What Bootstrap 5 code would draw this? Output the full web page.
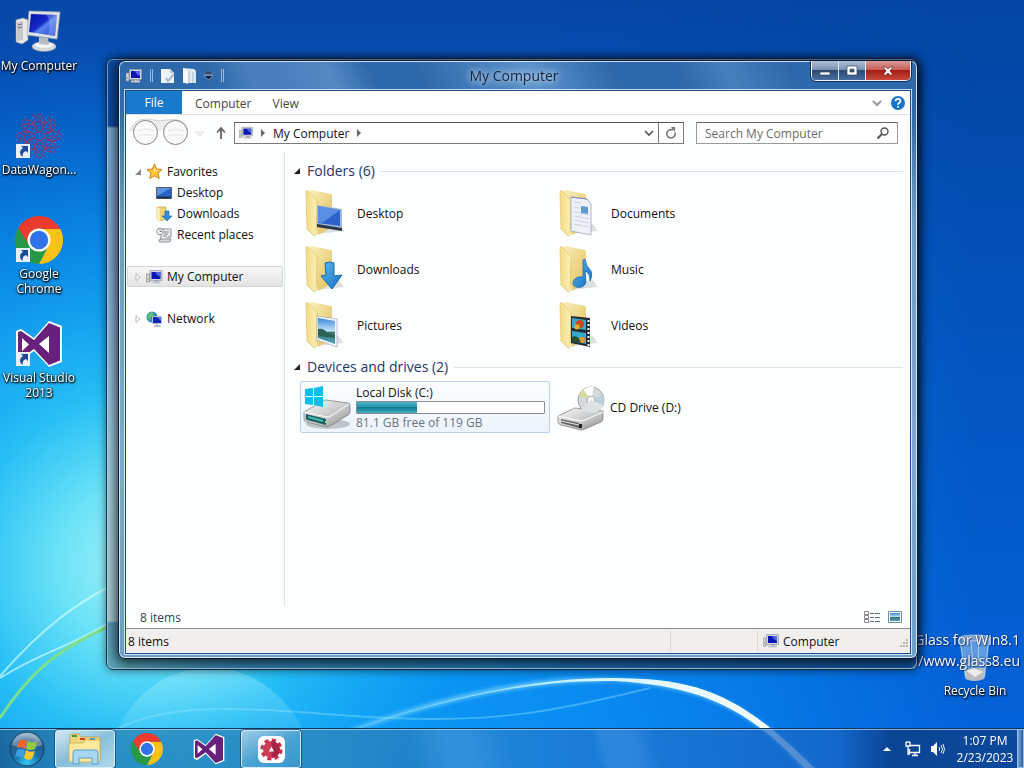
<!DOCTYPE html>
<html lang="en">
<head>
<meta charset="utf-8">
<meta name="viewport" content="width=device-width, initial-scale=1">
<title>My Computer</title>
<link href="https://cdn.jsdelivr.net/npm/bootstrap@5.3.0/dist/css/bootstrap.min.css" rel="stylesheet">
<style>
  body { font-family: "Open Sans", "Noto Sans", sans-serif; font-size: 12px; line-height: 15px; color: #111; background: #0868d0; }
  svg { display: block; flex: none; }
  button { font: inherit; color: inherit; }
  a { color: inherit; text-decoration: none; }
  .plain-btn { border: 0; background: none; padding: 0; display: flex; align-items: center; justify-content: center; }
  .wallpaper { width: 100%; height: 100%; }

  /* desktop shortcuts */
  .shortcut-cell { width: 78px; height: 104px; padding-top: 8px; gap: 2px; color: #fff; text-align: center; text-shadow: 0 1px 2px #000, 1px 1px 2px #000, 0 0 3px rgba(0,0,0,.7); }
  .bin-cell { right: 10px; bottom: 30px; width: 78px; gap: 0; color: #fff; text-shadow: 0 1px 2px #000, 1px 1px 2px #000; }
  .watermark { right: 4px; bottom: 57px; font-size: 14px; line-height: 21px; color: #fff; text-shadow: 0 0 2px rgba(0,20,80,.8), 1px 1px 1px rgba(0,20,80,.6); }

  /* windows */
  .glass-back { inset: 58px 106px 58px 106px; border-radius: 7px; border: 1px solid #16304f; box-shadow: inset 0 0 0 1px rgba(200,225,250,.55), 0 0 10px rgba(0,0,0,.5);
    background: linear-gradient(180deg, #0c4ba3 0, #0c4ba3 67px, #7ba7d4 69px, #83add6 200px, #a0cce0 400px, #a8ccd2 562px, #5a98b4 564px, #5eaac2 100%); }
  .glass-back::after { content: ""; position: absolute; left: 1px; right: 1px; bottom: 1px; height: 20px; border-radius: 0 0 6px 6px; background: linear-gradient(90deg, #5aa6b6 0, #3585b0 15%, #2377b2 45%, #1d68b0 60%, #12539c 100%); }
  .glass-front { inset: 60px 106px 69px 118px; border-radius: 7px; border: 1px solid #0d1a2f; padding: 0 6px 4px; box-shadow: inset 0 0 0 1px rgba(235,245,255,.85), 0 2px 12px 2px rgba(0,0,0,.75);
    background: linear-gradient(65deg, transparent 0 12%, rgba(130,175,225,.3) 17% 20%, rgba(130,175,225,.45) 27%, transparent 32% 38%, rgba(140,190,235,.5) 52%, rgba(120,170,225,.3) 57%, transparent 62% 70%, rgba(120,170,225,.35) 76%, transparent 84%) top/100% 30px no-repeat, linear-gradient(180deg, #2d68ab 0, #2f6aac 50px, #6f9cc6 160px, #7da9cd 400px, #6b9fc5 100%); }
  .title-strip { height: 29px; }
  .title-text { font-size: 14px; color: #16263e; text-shadow: 0 0 6px rgba(255,255,255,.75), 0 0 10px rgba(255,255,255,.6); }
  .quick-bar { gap: 8px; padding-left: 1px; }
  .quick-sep { width: 3px; height: 13px; border: solid rgba(190,215,245,.7); border-width: 0 1px; }
  .caption-set { border: 1px solid #f0f6ff; border-top: 0; border-radius: 0 0 5px 5px; outline: 1px solid rgba(10,25,55,.7); height: 20px; overflow: hidden; }
  .caption-set button { width: 27px; background: linear-gradient(#aebfd4 0, #7c94b4 45%, #2a4973 50%, #466e9f 100%); border-right: 1px solid #dbe8f7; }
  .caption-set .close-btn { width: 44px; border-right: 0; background: linear-gradient(#d99a94 0, #c46059 45%, #a51d15 50%, #c9483a 100%); }
  .client { border: 1px solid #1d4a8c; outline: 1px solid rgba(235,245,255,.8); background: #fdfefe; }
  .tab-row { height: 24px; border-bottom: 1px solid #dcdfe2; background: #fff; color: #444; }
  .tab-row a { padding: 0 13px; height: 23px; line-height: 26px; }
  .tab-row .file-tab { background: #1979ca; color: #fff; padding: 0; width: 56px; text-align: center; line-height: 24px; }
  .address-row { height: 36px; padding: 0 12px 0 4px; }
  .address-box { height: 22px; border: 1px solid #7b7b7b; border-top-color: #555; background: #fff; }
  .refresh-btn { width: 25px; height: 20px; border-left: 1px solid #777 !important; }
  .search-box { width: 202px; height: 22px; border: 1px solid #9a9a9a; border-top-color: #666; margin-left: 12px; background: #fff; }
  .search-box input { border: 0; outline: 0; background: transparent; padding: 0 0 0 8px; min-width: 0; color: #555; }
  .search-box input::placeholder { color: #6b6b6b; opacity: 1; }

  .side-nav { width: 159px; border-right: 1px solid #dde6f0; padding: 10px 1px 0 1px; }
  .side-nav a { display: flex; align-items: center; height: 21px; border: 1px solid transparent; padding-left: 6px; gap: 4px; }
  .side-nav .sub-item { padding-left: 28px; gap: 5px; }
  .side-nav .picked { border-color: #d6d6d6; border-radius: 2px; background: linear-gradient(#f7f7f7, #e4e4e4); margin: 21px 0; }
  .group-head { font-size: 14px; line-height: 20px; color: #24346b; font-weight: 400; margin: 0; gap: 6px; }
  .group-head::after { content: ""; flex: 1; height: 1px; background: #dfe2e4; }
  .listing { padding: 10px 7px 0 8px; }
  .tile-grid { display: grid; grid-template-columns: repeat(auto-fill, 250px); column-gap: 4px; padding-left: 7px; }
  .tile { display: flex; align-items: center; height: 56px; padding-left: 4px; gap: 5px; }
  .drive-tile { height: 52px; border: 1px solid transparent; padding-left: 2px; }
  .drive-tile.hot { border-color: #b8d2ee; border-radius: 2px; background: linear-gradient(#fbfdff, #edf4fc); }
  .usage-meter { height: 13px; width: 189px; margin: 1px 0; border: 1px solid #8b8d93; border-radius: 1px; background: #fff; }
  .usage-fill { height: 100%; background: linear-gradient(#4ab4c6 0, #2597ad 45%, #107b95 50%, #3fb0c2 100%); }
  .muted-line { color: #6a7480; }
  .details-row { height: 22px; padding: 0 8px 0 14px; color: #33415a; }
  .status-row { height: 25px; border-top: 1px solid #8a8e92; background: #f1eeee; padding-left: 2px; }
  .status-row .cell-mid { width: 88px; border: solid #d9d6d6; border-width: 0 1px; height: 20px; }
  .status-row .cell-end { width: 152px; padding-left: 5px; gap: 4px; }

  /* taskbar */
  .taskbar { height: 40px; border-top: 1px solid #10365f; box-shadow: inset 0 1px 0 rgba(170,215,245,.75); color: #fff;
    background: linear-gradient(75deg, rgba(10,60,120,.1) 0 40%, rgba(120,190,250,.18) 44% 46%, transparent 50% 58%, rgba(140,200,250,.16) 59% 62%, transparent 64%), linear-gradient(90deg, rgba(30,90,140,.75) 0, rgba(50,140,190,.7) 8%, rgba(50,145,195,.75) 30%, rgba(35,120,205,.7) 55%, rgba(24,100,195,.75) 82%, rgba(12,62,135,.85) 87%, rgba(14,68,145,.85) 100%); }
  .task-btn { width: 60px; height: 38px; margin: 1px 1px 0; border: 1px solid transparent !important; border-radius: 3px; }
  .task-btn.lit { border-color: rgba(225,245,255,.85) !important; outline: 1px solid rgba(10,50,90,.6); background: linear-gradient(150deg, rgba(255,255,255,.55), rgba(160,210,240,.3) 50%, rgba(110,180,225,.25)); }
  .task-btn.front { background: linear-gradient(150deg, rgba(255,255,255,.8), rgba(200,225,235,.6) 50%, rgba(225,240,245,.75)); }
  .clock { width: 64px; line-height: 17px; text-align: center; }
  .tray { gap: 10px; }
  .peek { width: 7px; border: 1px solid #8fc0ea !important; background: linear-gradient(90deg, #7fa5cf, #2b5f9f); }
</style>
</head>
<body>
<svg class="position-absolute" width="0" height="0" aria-hidden="true">
  <defs>
    <linearGradient id="scr" x1="0" y1="0" x2="1" y2="1"><stop offset="0" stop-color="#0716a8"/><stop offset=".45" stop-color="#1428c8"/><stop offset=".55" stop-color="#5a84ee"/><stop offset="1" stop-color="#1c3fd0"/></linearGradient>
    <linearGradient id="fold" x1="0" y1="0" x2="1" y2="0"><stop offset="0" stop-color="#f3dc85"/><stop offset="1" stop-color="#fbf0b5"/></linearGradient>
    <linearGradient id="foldb" x1="0" y1="0" x2="1" y2="1"><stop offset="0" stop-color="#faf0bf"/><stop offset="1" stop-color="#e0be55"/></linearGradient>
    <linearGradient id="blu" x1="0" y1="0" x2="1" y2="1"><stop offset="0" stop-color="#5fb5f0"/><stop offset="1" stop-color="#1170c0"/></linearGradient>
    <linearGradient id="metal" x1="0" y1="0" x2="1" y2="1"><stop offset="0" stop-color="#fbfbfb"/><stop offset=".6" stop-color="#c4c4c4"/><stop offset="1" stop-color="#858585"/></linearGradient>
    <linearGradient id="pic" x1="0" y1="0" x2="0" y2="1"><stop offset="0" stop-color="#3a86d8"/><stop offset=".5" stop-color="#c4e4f8"/><stop offset=".55" stop-color="#3a7468"/><stop offset="1" stop-color="#4fa3c8"/></linearGradient>
    <symbol id="pc" viewBox="0 0 48 48">
      <path d="M1 12l7-2 5 2v20l-6 4-6-2z" fill="#e9e9ea" stroke="#999" stroke-width=".6"/><path d="M2 14l6-1v19l-6 1z" fill="#c6c8cb"/><path d="M3 17l4-1M3 20l4-1" stroke="#666"/>
      <ellipse cx="29" cy="38.500" rx="12" ry="5" fill="#d5d8dc" stroke="#9aa0a7" stroke-width=".6"/><ellipse cx="29" cy="37" rx="9" ry="3" fill="#f4f5f6"/><path d="M24 29l9 1 1 7-10-1z" fill="#b8bdc4"/>
      <path d="M14 3l31 1-3 27-30-4z" fill="#dfe2e5" stroke="#a5aab0" stroke-width=".7"/><path d="M16 6l26 1-2 21-26-4z" fill="url(#scr)"/><path d="M31 6l11 1-2 21-7-1c3-9 2-14-2-21z" fill="#9ab9f5" opacity=".4"/>
    </symbol>
    <symbol id="pcs" viewBox="0 0 16 16">
      <path d="M0 5h3v8H0z" fill="#d7d7d7" stroke="#888" stroke-width=".7"/><path d="M1 10h1" stroke="#3a3"/><path d="M8 11h4v2H8z" fill="#a4a7aa"/><path d="M5 13.500h9" stroke="#c5c8ca" stroke-width="2"/>
      <path d="M3.500 1.500h12v10h-12z" fill="#d2d6dc" stroke="#949aa2" stroke-width=".7"/><path d="M5 3h9v7H5z" fill="#0b16b0"/><path d="M9 3h5v5c-3-1-4-3-5-5z" fill="#4d68e2"/>
    </symbol>
    <symbol id="chrome" viewBox="0 0 48 48">
      <path d="M24 13h21.300A24 24 0 0 1 24 48l9.500-18.500z" fill="#fbc116"/><path d="M3.200 12A24 24 0 0 0 24 48l9.500-18.500L24 24z" fill="#279847"/><path d="M3.200 12A24 24 0 0 1 45.300 13H24l-9.500 16.500z" fill="#ea3b2e"/>
      <circle cx="24" cy="24" r="11.500" fill="#fff"/><circle cx="24" cy="24" r="9.200" fill="#2f72ea"/>
    </symbol>
    <symbol id="vs" viewBox="0 0 48 48">
      <path d="M34 1l13 5v36l-13 5-15-16L6 41l-5-3V11l5-2 13 9z" fill="#fff"/>
      <path d="M34 3l11 4.500v33L34 45 19 29 6 38l-3-2V12l3-1 13 9z" fill="#68217a"/><path d="M34 16l-10 8 10 9zM7 18v13l7-6.500z" fill="#fff"/>
    </symbol>
    <symbol id="jump" viewBox="0 0 14 14"><path d="M0 0h14v14H0z" fill="#e8f1fa"/><path d="M5 2h7v7l-2-2c-3 1-4 3-3 6-4-2-4-7 0-9z" fill="#1c4a94"/></symbol>
    <symbol id="folder" viewBox="0 0 48 48">
      <path d="M12 45l28-3-6-8z" fill="#000" opacity=".12"/><path d="M4 2l3-1 20 4 1 1v32l-14 8z" fill="url(#foldb)"/><path d="M2 3q0-2 2-1l8 8q1 1 1 3l-1 33q-1 2-3 0L3 40z" fill="url(#fold)" stroke="#d8ba5d" stroke-width=".6"/>
    </symbol>
    <symbol id="drive" viewBox="0 0 48 30">
      <ellipse cx="25" cy="25" rx="22" ry="5" opacity=".2"/><path d="M1 13L20 2q1-1 3-1l22 3q2 0 2 3v6q0 2-2 3L27 27q-2 1-4 1L4 23q-3-1-3-3z" fill="url(#metal)" stroke="#777" stroke-width=".7"/>
      <path d="M1 13l23 5q2 0 4-1L46 5" fill="none" stroke="#fff"/>
    </symbol>
  </defs>
</svg>

<div class="vh-100 d-flex flex-column position-relative overflow-hidden">
  <div class="position-absolute top-0 start-0 w-100 h-100">
    <svg class="wallpaper" viewBox="0 0 1024 768" preserveAspectRatio="none" aria-hidden="true">
      <defs>
        <linearGradient id="sky" x1="0" y1="0" x2="0" y2="1"><stop offset="0" stop-color="#0847a8"/><stop offset=".2" stop-color="#0459c2"/><stop offset=".5" stop-color="#0a85e4"/><stop offset="1" stop-color="#0a90f8"/></linearGradient>
        <linearGradient id="shade" x1="0" y1="0" x2="0" y2="1"><stop offset="0" stop-color="#0446a2"/><stop offset=".4" stop-color="#0352bb"/><stop offset="1" stop-color="#0464dc"/></linearGradient>
        <linearGradient id="fade" x1="0" y1="0" x2="1" y2="0"><stop offset=".55" stop-color="#fff" stop-opacity="0"/><stop offset=".95" stop-color="#fff"/></linearGradient>
        <mask id="fademask"><path d="M0 0h1024v768H0z" fill="url(#fade)"/></mask>
        <radialGradient id="glow" gradientUnits="userSpaceOnUse" cx="140" cy="565" r="520"><stop offset="0" stop-color="#a4f2f8"/><stop offset=".16" stop-color="#6ae2f7"/><stop offset=".34" stop-color="#26c0f6" stop-opacity=".95"/><stop offset=".62" stop-color="#0c9cf2" stop-opacity=".6"/><stop offset="1" stop-color="#0880e8" stop-opacity="0"/></radialGradient>
        <linearGradient id="arc" x1="0" y1="0" x2="1" y2="0"><stop offset="0" stop-color="#7ae0ff" stop-opacity=".3"/><stop offset=".5" stop-color="#d5f6ff"/><stop offset="1" stop-color="#fff"/></linearGradient>
        <linearGradient id="bubble" x1="0" y1="0" x2="0" y2="1"><stop offset="0" stop-color="#cff" stop-opacity=".3"/><stop offset="1" stop-color="#cff" stop-opacity=".08"/></linearGradient>
        <filter id="soft"><feGaussianBlur stdDeviation="2"/></filter>
        <filter id="soft1"><feGaussianBlur stdDeviation=".7"/></filter>
      </defs>
      <path d="M0 0h1024v768H0z" fill="url(#sky)"/><path d="M0 0h1024v768H0z" fill="url(#shade)" mask="url(#fademask)"/><path d="M0 0h1024v768H0z" fill="url(#glow)"/>
      <path d="M115 735C150 650 260 640 306 735z" fill="url(#bubble)"/>
      <g fill="none" filter="url(#soft1)">
        <path d="M0 678C45 650 75 645 110 622M0 676C45 625 75 605 110 586" stroke="#d6ffff" stroke-width="2" opacity=".65"/>
        <path d="M0 718C30 672 60 645 125 620" stroke="#7adf8c" stroke-width="3"/>
        <path d="M115 730C180 695 280 713 390 718S560 710 650 688" stroke="#8fe6ff" stroke-width="2" opacity=".4"/>
      </g>
      <path d="M350 730C430 700 530 674 615 679S740 695 818 772L806 772C755 710 700 686 615 681 520 680 430 704 350 732z" fill="#7fd8ff" filter="url(#soft)"/>
      <path d="M350 730C430 702 530 677 615 678S740 693 818 772L808 772C748 707 700 686 615 681 520 679 430 704 350 731z" fill="url(#arc)" filter="url(#soft1)"/>
    </svg>
  </div>

  <main class="flex-grow-1 position-relative">
    <div class="position-absolute top-0 start-0 d-flex flex-column">
      <a href="#" class="shortcut-cell d-flex flex-column align-items-center"><svg width="48" height="48"><use href="#pc"/></svg><span>My Computer</span></a>
      <a href="#" class="shortcut-cell d-flex flex-column align-items-center">
        <svg width="48" height="48" viewBox="0 0 48 48"><g fill="none" stroke="#c2304c" stroke-width=".8" opacity=".85"><g id="petal"><ellipse cx="24" cy="11" rx="5" ry="9"/><path d="M18 18q-4-5 2-9 6 4 7-6M17 3q10 3 12 13"/></g><use href="#petal" transform="rotate(45 24 24)"/><use href="#petal" transform="rotate(90 24 24)"/><use href="#petal" transform="rotate(135 24 24)"/><use href="#petal" transform="rotate(180 24 24)"/><use href="#petal" transform="rotate(225 24 24)"/><use href="#petal" transform="rotate(270 24 24)"/><use href="#petal" transform="rotate(315 24 24)"/></g><use href="#jump" y="32" x="1" width="14" height="14"/></svg><span>DataWagon...</span></a>
      <a href="#" class="shortcut-cell d-flex flex-column align-items-center"><svg width="48" height="48"><use href="#chrome" width="48" height="48"/><use href="#jump" y="32" x="1" width="14" height="14"/></svg><span>Google Chrome</span></a>
      <a href="#" class="shortcut-cell d-flex flex-column align-items-center"><svg width="48" height="48"><use href="#vs" width="48" height="48"/><use href="#jump" y="32" x="1" width="14" height="14"/></svg><span>Visual Studio 2013</span></a>
    </div>

    <a href="#" class="bin-cell position-absolute d-flex flex-column align-items-center">
      <svg width="48" height="50" viewBox="0 0 48 50"><path d="M8 5l31-1-5 41q-10 5-20 1z" fill="#b9d4ec" opacity=".5"/><path d="M13 36l21-1-1 11q-10 4-18 0z" fill="#b8bcc0"/><path d="M15 38l8-3 9 4-8 5z" fill="#eceae8"/><ellipse cx="24" cy="5" rx="16" ry="3" fill="#7fa6cf" stroke="#dcebf6" stroke-width=".6"/><path d="M9 7l6 37M38 7l-5 37M20 9l2 24M28 9l-1 24" stroke="#e9f5ff" opacity=".5"/></svg>
      <span>Recycle Bin</span></a>
    <div class="watermark position-absolute text-end">Glass for Win8.1<br>/www.glass8.eu</div>

    <div class="glass-back position-absolute"></div>

    <section class="glass-front position-absolute d-flex flex-column" aria-label="My Computer window">
      <header class="title-strip d-flex align-items-center position-relative">
        <div class="quick-bar d-flex align-items-center flex-grow-1">
          <button class="plain-btn" aria-label="System menu"><svg width="16" height="16"><use href="#pcs"/></svg></button>
          <span class="quick-sep"></span>
          <button class="plain-btn" aria-label="Properties"><svg width="14" height="16" viewBox="0 0 14 16"><path d="M0 1h9l4 4v10H0z" fill="#edf4fb"/><path d="M9 1v4h4" fill="#b8cce2"/><path d="M5 10l2 3 6-7" fill="none" stroke="#a4b8ce" stroke-width="2"/></svg></button>
          <button class="plain-btn" aria-label="New folder"><svg width="13" height="16" viewBox="0 0 13 16"><path d="M0 0l11 1 2 2v12H0z" fill="#dfe9f2"/><path d="M0 0l5 3v13l-5-2z" fill="#f7fafd"/><path d="M6 3v11M10 4v11" stroke="#a7bacd"/></svg></button>
          <button class="plain-btn" aria-label="Customize toolbar"><svg width="9" height="8" viewBox="0 0 9 8"><path d="M0 0h9v2H0zM0 3.500h9L4.500 8z" fill="#0c1d3c" stroke="#c8dcf2" stroke-width=".5"/></svg></button>
          <span class="quick-sep"></span>
        </div>
        <div class="title-text position-absolute start-50 translate-middle-x pe-2">My Computer</div>
        <div class="caption-set d-flex align-self-start">
          <button class="plain-btn" aria-label="Minimize"><svg width="12" height="12" viewBox="0 0 12 12"><path d="M1 7h10v3H1z" fill="#fff" stroke="#33455f" stroke-width=".7"/></svg></button>
          <button class="plain-btn" aria-label="Maximize"><svg width="12" height="12" viewBox="0 0 12 12"><path fill-rule="evenodd" d="M1 1h10v9H1zM4 4h4v3H4z" fill="#fff" stroke="#33455f" stroke-width=".7"/></svg></button>
          <button class="plain-btn close-btn" aria-label="Close"><svg width="12" height="12" viewBox="0 0 12 12"><path d="M1 2h3l2 2 2-2h3L8 6l3 4H8L6 8l-2 2H1l3-4z" fill="#fff" stroke="#6d2020" stroke-width=".7"/></svg></button>
        </div>
      </header>

      <div class="client d-flex flex-column flex-grow-1">
        <nav class="tab-row d-flex" aria-label="Ribbon">
          <a href="#" class="file-tab">File</a><a href="#">Computer</a><a href="#" class="ps-2">View</a>
          <div class="ms-auto d-flex align-items-center gap-2 pe-1">
            <button class="plain-btn" aria-label="Expand ribbon"><svg width="10" height="10" viewBox="0 0 10 10"><path d="M1 3l4 4 4-4" fill="none" stroke="#999" stroke-width="2"/></svg></button>
            <button class="plain-btn" aria-label="Help"><svg width="16" height="16" viewBox="0 0 16 16"><circle cx="8" cy="8" r="7" fill="#1674cd"/><path d="M5.500 6.200Q5.600 3.800 8 3.800t2.500 2.200Q10.500 7.200 9 8q-1 .6-1 1.700M8 11v1.800" fill="none" stroke="#fff" stroke-width="1.700"/></svg></button>
          </div>
        </nav>

        <div class="address-row d-flex align-items-center">
          <svg width="86" height="30" viewBox="0 0 86 30" role="img" aria-label="Back and forward">
            <path d="M0 13Q4 0 18 1q10 3 20 1Q54-1 58 12" fill="#ededed" stroke="#d3d3d3"/>
            <circle cx="15.500" cy="14.500" r="12" fill="#fafafa" stroke="#858585"/><circle cx="45.500" cy="14.500" r="12" fill="#fafafa" stroke="#858585"/>
            <path d="M8 13q8-4 16 0M8 17h16M38 13q8-4 16 0M38 17h16" fill="none" stroke="#e1e1e1"/><path d="M65 14h9l-4 4z" fill="#f3f3f3" stroke="#d8d8d8" stroke-width=".6"/>
          </svg>
          <button class="plain-btn me-2" aria-label="Up"><svg width="10" height="14" viewBox="0 0 10 14"><path d="M5 13V3M1 6.500L5 2l4 4.500" fill="none" stroke="#666" stroke-width="1.800"/></svg></button>
          <div class="address-box flex-grow-1 d-flex align-items-center">
            <svg class="ms-1" width="14" height="16"><use href="#pcs" width="14" height="16"/></svg>
            <svg class="mx-2" width="4" height="8" viewBox="0 0 4 8"><path d="M0 0l4 4-4 4z" fill="#666"/></svg>
            <a href="#">My Computer</a>
            <svg class="ms-2" width="4" height="8" viewBox="0 0 4 8"><path d="M0 0l4 4-4 4z" fill="#666"/></svg>
            <button class="plain-btn ms-auto me-1" aria-label="Previous locations"><svg width="10" height="8" viewBox="0 0 10 8"><path d="M1 2l4 4 4-4" fill="none" stroke="#555" stroke-width="1.600"/></svg></button>
            <button class="plain-btn refresh-btn" aria-label="Refresh"><svg width="12" height="12" viewBox="0 0 12 12"><path d="M10 5.500A4.200 4.200 0 1 1 6 2.600h2" fill="none" stroke="#777" stroke-width="1.600"/><path d="M6 0h4v5z" fill="#777"/></svg></button>
          </div>
          <div class="search-box d-flex align-items-center pe-2">
            <input class="flex-grow-1" type="text" placeholder="Search My Computer" aria-label="Search My Computer">
            <svg width="12" height="12" viewBox="0 0 12 12"><circle cx="7.500" cy="4.500" r="3.500" fill="none" stroke="#555" stroke-width="1.400"/><path d="M5 7l-4.500 4.500" stroke="#555" stroke-width="2"/></svg>
          </div>
        </div>

        <div class="d-flex flex-grow-1">
          <nav class="side-nav flex-shrink-0" aria-label="Navigation pane">
            <a href="#"><svg width="8" height="8" viewBox="0 0 8 8"><path d="M7 1v6H1z" fill="#888"/></svg><svg width="17" height="17" viewBox="0 0 17 17"><path d="M8.500 1l2.200 5 5.300.6-4 3.600 1.200 5.300-4.700-2.700-4.700 2.700L5 10.200 1 6.600 6.300 6z" fill="#fdc433" stroke="#e07b1c"/><path d="M8.500 3l1.500 4 3 .5-5 2z" fill="#ffe88d"/></svg>Favorites</a>
            <a href="#" class="sub-item"><svg width="16" height="16" viewBox="0 0 16 16"><path d="M.5 2.500h15v11H.5z" fill="#2a62c4" stroke="#53606f"/><path d="M1 3h14L1 11z" fill="#5c94e2"/><path d="M1 12.500h14" stroke="#20324f" stroke-width="2"/></svg>Desktop</a>
            <a href="#" class="sub-item"><svg width="16" height="16" viewBox="0 0 16 16"><path d="M1 1h9v12l-6 2-3-2z" fill="#edd277" stroke="#c5a33d" stroke-width=".6"/><path d="M1 1l3 2v12l-3-2z" fill="#fbefb3"/><path d="M9 5h4v5h3l-5 5-5-5h3z" fill="#2f8fdc" stroke="#1763a8" stroke-width=".6"/></svg>Downloads</a>
            <a href="#" class="sub-item"><svg width="16" height="16" viewBox="0 0 16 16"><path d="M5 2h10v8H12v4H3q2-2 2-5z" fill="#ececec" stroke="#8e9499"/><path d="M3 14q0-2 3-2h9q0 3-3 3H3" fill="#d9dcde" stroke="#8e9499"/><path d="M8 5h5M8 7h4M7 9h4" stroke="#7b8b99"/><circle cx="4" cy="4.500" r="3.300" fill="#f7f8f9" stroke="#8b9299"/><path d="M4 2.500v2h2" fill="none" stroke="#666" stroke-width=".8"/></svg>Recent places</a>
            <a href="#" class="picked"><svg width="8" height="8" viewBox="0 0 8 8"><path d="M2 .5L6 4 2 7.500z" fill="#fff" stroke="#aaa" stroke-width=".8"/></svg><svg width="17" height="16"><use href="#pcs"/></svg>My Computer</a>
            <a href="#"><svg width="8" height="8" viewBox="0 0 8 8"><path d="M2 .5L6 4 2 7.500z" fill="#fff" stroke="#aaa" stroke-width=".8"/></svg><svg width="17" height="16" viewBox="0 0 17 16"><circle cx="6" cy="6" r="5.500" fill="#2a86d2"/><path d="M2 3q4-4 6 0-1 3-4 4l1 3q-5-2-3-7" fill="#59c26a"/><path d="M6.500 5.500h9v7h-9z" fill="#1026ba" stroke="#b7c2d0"/><path d="M11 6h4v4z" fill="#5d7cec"/><path d="M8 15h7M11 13v2" stroke="#7f8d9d"/></svg>Network</a>
          </nav>

          <div class="listing flex-grow-1">
            <h2 class="group-head d-flex align-items-center"><svg width="8" height="8" viewBox="0 0 8 8"><path d="M7 1v6H1z" fill="#222"/></svg>Folders (6)</h2>
            <div class="tile-grid mt-1">
              <a href="#" class="tile"><svg width="48" height="48"><use href="#folder"/><path d="M13 16l25 4v21l-25-4z" fill="#a6b9d2"/><path d="M14 17l22 4v16l-22-3z" fill="#2d62cd"/><path d="M14 17l22 4-18 13-4-1z" fill="#6fa2ee" opacity=".7"/><path d="M13 35l25 4v3l-25-4z" fill="#28364e"/></svg>Desktop</a>
              <a href="#" class="tile"><svg width="48" height="48"><use href="#folder"/><path d="M13 8l16 2 4 5v31l-20-4z" fill="#eef1f8" stroke="#9ea7c2" stroke-width=".8"/><path d="M16 13l7 1M16 18l6 1M16 23l15 3M16 27l15 3M16 31l15 3M16 35l15 3" stroke="#ccd3e2"/><path d="M23 17l7 1v7l-7-1z" fill="#5b9bd0"/><path d="M13 8l16 2" stroke="#8b86b8"/></svg>Documents</a>
              <a href="#" class="tile"><svg width="48" height="48"><use href="#folder"/><path d="M21 18q5-2 9 0v13l8-1-10 14-11-13 5-1z" fill="url(#blu)" stroke="#176aa8"/></svg>Downloads</a>
              <a href="#" class="tile"><svg width="48" height="48"><use href="#folder"/><path d="M25 15l2-1q1 7 6 12 2 5-1 10 0-8-5-10l1 11q-2 7-10 5-5-2-2-7 3-4 9-3z" fill="url(#blu)" stroke="#1766ad" stroke-width=".7"/></svg>Music</a>
              <a href="#" class="tile"><svg width="48" height="48"><use href="#folder"/><path d="M13 15l20 3v28l-20-7z" fill="#f4f7fa" stroke="#9eabb8" stroke-width=".7"/><path d="M14 17l17 3v23l-17-6z" fill="url(#pic)"/><path d="M14 28q6-1 9 4l8 2v3l-17-2z" fill="#2a6355"/></svg>Pictures</a>
              <a href="#" class="tile"><svg width="48" height="48"><use href="#folder"/><path d="M13 15l19 2v29l-19-4z" fill="#262c31"/><path d="M14 17l14 2v10l-14-2zM14 30l14 2v11l-14-3z" fill="#38a9cd"/><circle cx="22" cy="23" r="4" fill="#cf4a1d"/><circle cx="19" cy="26" r="2.500" fill="#e9b52e"/><circle cx="24" cy="39" r="3" fill="#e6992c"/><path d="M14 36q6-3 9 6l-9-2z" fill="#275029"/><path d="M30.500 19v26" stroke="#fff" stroke-width="2" stroke-dasharray="2 2"/></svg>Videos</a>
            </div>
            <h2 class="group-head d-flex align-items-center mt-1"><svg width="8" height="8" viewBox="0 0 8 8"><path d="M7 1v6H1z" fill="#222"/></svg>Devices and drives (2)</h2>
            <div class="tile-grid pt-1">
              <a href="#" class="tile drive-tile hot"><svg width="48" height="48"><svg x="0" y="16" width="48" height="30"><use href="#drive"/><path d="M3 15l20 5v6L4 21q-2-1-1-6z" fill="#1d5c60"/><path d="M5 18l15 4" stroke="#4cb8b4" stroke-width="2"/><path d="M22 22h2v2h-2z" fill="#7f6"/></svg><path d="M2 6l8-1v8H2zM11 5l9-2v10h-9zM2 14h8v8l-8-1zM11 14h9v10l-9-2z" fill="#08bdf0"/></svg>
                <span><span class="d-block">Local Disk (C:)</span><span class="d-block usage-meter"><span class="d-block usage-fill" style="width:32%"></span></span><span class="d-block muted-line">81.1 GB free of 119 GB</span></span></a>
              <a href="#" class="tile drive-tile"><svg width="48" height="48"><ellipse cx="34" cy="17" rx="13" ry="13" fill="#d4d8da" stroke="#9da2a5"/><path d="M34 17l-8-10q5-4 11-3zM34 17l12 6q-4 6-9 6z" fill="#fff"/><path d="M34 17l-12-4q1-4 4-7z" fill="#d8dc9c"/><path d="M34 17l12-5q2 5 0 10z" fill="#b8d3dc"/><circle cx="34" cy="17" r="4" fill="#f9f9f9" stroke="#aaa"/><path d="M1 33l17-8 28 3v8q0 2-2 3l-16 7q-2 1-4 1L4 42q-3-1-3-3z" fill="url(#metal)" stroke="#777" stroke-width=".7"/><path d="M34 17l12 6q-4 7-12 7-7-1-10-5z" fill="#dde1e3"/><path d="M1 33l23 5q2 0 4-1l18-8" fill="none" stroke="#fff"/><path d="M4 36l18 4v5L4 40z" fill="#666"/><path d="M4 38l18 4" stroke="#e9e9e9"/><path d="M22 41h3v4h-3z" fill="#222"/></svg>CD Drive (D:)</a>
            </div>
          </div>
        </div>

        <div class="details-row d-flex align-items-center">
          <span>8 items</span>
          <button class="plain-btn ms-auto" aria-label="Details view"><svg width="16" height="13" viewBox="0 0 16 13"><path d="M.5.5h4v3h-4zM.5 4.500h4v3h-4zM.5 8.500h4v3h-4z" fill="#fff" stroke="#888"/><path d="M6 2.500h4M11 2.500h5M6 6.500h4M11 6.500h5M6 10.500h4M11 10.500h5" stroke="#667"/></svg></button>
          <button class="plain-btn ms-2" aria-label="Large icons view"><svg width="14" height="12" viewBox="0 0 14 12"><path d="M.5.5h13v11H.5z" fill="#fff" stroke="#6d8ba8"/><path d="M2 2h10v8H2z" fill="url(#pic)"/></svg></button>
        </div>
        <footer class="status-row d-flex align-items-center">
          <span class="flex-grow-1">8 items</span><span class="cell-mid"></span>
          <span class="cell-end d-flex align-items-center"><svg width="16" height="16"><use href="#pcs"/></svg>Computer
            <svg class="ms-auto align-self-end" width="11" height="11" viewBox="0 0 11 11"><path d="M7 1h2v2H7zM7 4h2v2H7zM7 7h2v2H7zM4 4h2v2H4zM4 7h2v2H4zM1 7h2v2H1z" fill="#b9b4b4"/></svg></span>
        </footer>
      </div>
    </section>
  </main>

  <footer class="taskbar d-flex position-relative">
    <button class="plain-btn px-2" aria-label="Start"><svg width="38" height="38" viewBox="0 0 38 38">
      <defs><radialGradient id="orb" cx=".5" cy=".9" r=".9"><stop offset="0" stop-color="#35c8f4"/><stop offset=".45" stop-color="#1a6aa8"/><stop offset=".75" stop-color="#2b5b86"/><stop offset="1" stop-color="#9fbdd2"/></radialGradient></defs>
      <circle cx="19" cy="19" r="17" fill="url(#orb)" stroke="#163c60"/><path d="M4 15a15.500 15.500 0 0 1 30 0q-15 6-30 0z" fill="#fff" opacity=".3"/>
      <path d="M11 11q4-3 8 0l-2 8q-4-3-8-1z" fill="#f0652c"/><path d="M20 11q4 3 9 0l-2 8q-4 2-9 0z" fill="#95c93c"/><path d="M9 20q4-2 8 0l-2 8q-4-3-8-1z" fill="#3d9ee4"/><path d="M18 20q4 3 9 1l-3 8q-4 2-8-1z" fill="#fdc72e"/></svg></button>
    <button class="plain-btn task-btn lit front" aria-label="File Explorer"><svg width="34" height="32" viewBox="0 0 34 32"><path d="M2 3q0-2 2-2h7l2 3h17q2 0 2 2v21H2z" fill="#efd67a" stroke="#b9973d" stroke-width=".7"/><path d="M4 2h5v2H4z" fill="#3a9a45"/><path d="M12 5h5v2h-5z" fill="#c8452f"/><path d="M22 5h5v3h-5z" fill="#4a90d0"/><path d="M1 10h14l2-3h15v20q0 2-2 2H3q-2 0-2-2z" fill="#fbe99d" stroke="#c9a94e" stroke-width=".7"/><path d="M5 31V20q0-3 3-3h19q3 0 3 3v11h-6v-6H11v6z" fill="#a7d6f2" stroke="#5b9dca"/></svg></button>
    <button class="plain-btn task-btn" aria-label="Google Chrome"><svg width="32" height="32"><use href="#chrome"/></svg></button>
    <button class="plain-btn task-btn" aria-label="Visual Studio"><svg width="32" height="32"><use href="#vs"/></svg></button>
    <button class="plain-btn task-btn lit" aria-label="Settings tool"><svg width="27" height="27" viewBox="0 0 27 27"><rect width="27" height="27" rx="6" fill="#fff"/><circle cx="13.500" cy="13.500" r="9.500" fill="none" stroke="#c62c4a" stroke-width="3" stroke-dasharray="4.200 3.260"/><circle cx="13.500" cy="13.500" r="8.500" fill="#cf3c55"/><path d="M13.500 5a8.500 8.500 0 0 1 0 17z" fill="#a82446"/><path d="M13.500 10.500l2.500 5h-5z" fill="#fff"/></svg></button>
    <div class="tray ms-auto d-flex align-items-center">
      <button class="plain-btn me-1" aria-label="Show hidden icons"><svg width="8" height="4" viewBox="0 0 8 4"><path d="M0 4l4-4 4 4z" fill="#fff"/></svg></button>
      <button class="plain-btn" aria-label="Network status"><svg width="16" height="16" viewBox="0 0 16 16"><path d="M4 4.500h10.500v7H4.500V8M7 14.500h6M10 12v2M1 1v4h4V1M3 5v8h2M2 0v2M4 0v2" fill="none" stroke="#fff" stroke-width="1.300"/></svg></button>
      <button class="plain-btn" aria-label="Volume"><svg width="14" height="16" viewBox="0 0 14 16"><path d="M0 5h2l4-4v14l-4-4H0z" fill="#fff"/><path d="M8 6q1.500 2 0 4M10 4q3 4 0 8M12 3q3 5 0 10" fill="none" stroke="#fff" stroke-width=".9"/></svg></button>
    </div>
    <div class="clock align-self-center ms-2">1:07 PM<br>2/23/2023</div>
    <button class="plain-btn peek" aria-label="Show desktop"></button>
  </footer>
</div>
<script src="https://cdn.jsdelivr.net/npm/bootstrap@5.3.0/dist/js/bootstrap.bundle.min.js"></script>
</body>
</html>
